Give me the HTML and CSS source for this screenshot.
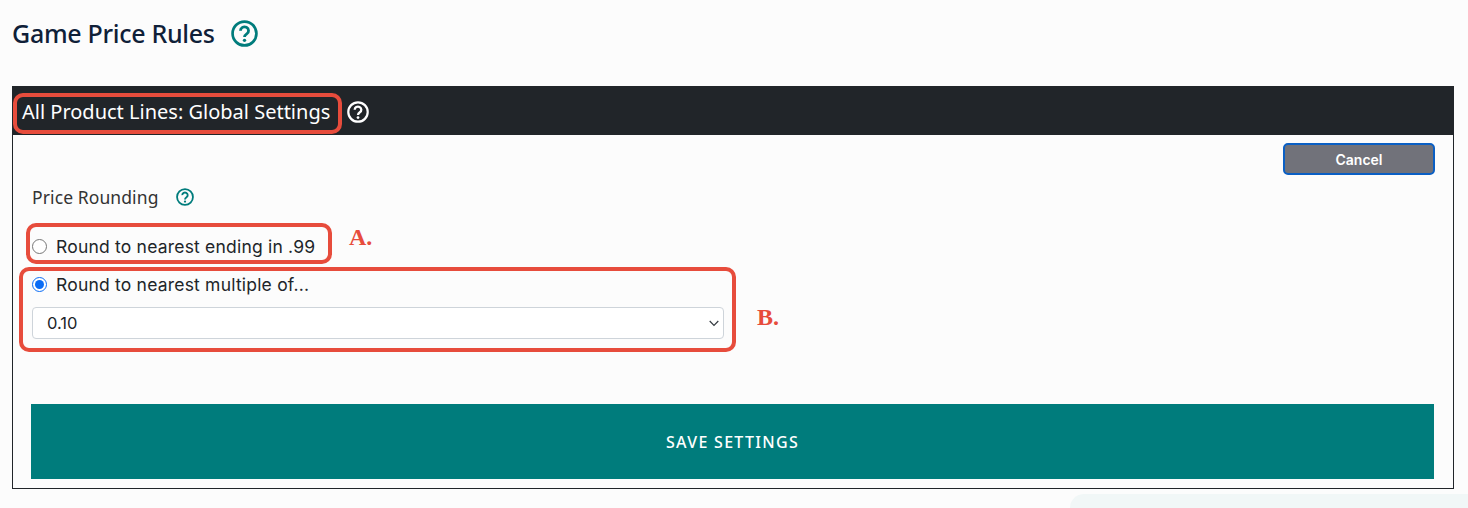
FILE: index.html
```html
<!DOCTYPE html>
<html lang="en">
<head>
    <meta charset="UTF-8">
    <title>Game Price Rules</title>
    <link rel="stylesheet" href="styles.css">
</head>
<body>
    <svg class="defs" width="0" height="0">
        <symbol id="help" viewBox="0 0 24 24">
            <circle cx="12" cy="12" r="10.6" fill="none" stroke="currentColor" stroke-width="2.4"/>
            <path d="M8.4 9.5a3.6 3.4 0 1 1 5.6 2.8c-1.3.9-2 1.500-2 2.900" fill="none" stroke="currentColor" stroke-width="2.500"/>
            <circle cx="12" cy="18.100" r="1.500" fill="currentColor"/>
        </symbol>
    </svg>

    <div class="page-title">
        <h1>Game Price Rules</h1>
        <svg class="help help-lg"><use href="#help"/></svg>
    </div>

    <div class="panel">
        <div class="panel-header">
            <span>All Product Lines: Global Settings</span>
            <svg class="help help-md"><use href="#help"/></svg>
        </div>
        <div class="panel-body">
            <div class="cancel-row">
                <button class="cancel">Cancel</button>
            </div>
            <div class="field-label">
                <span>Price Rounding</span>
                <svg class="help help-sm"><use href="#help"/></svg>
            </div>
            <label class="radio">
                <input type="radio" name="rounding">
                <span>Round to nearest ending in .99</span>
            </label>
            <label class="radio">
                <input type="radio" name="rounding" checked>
                <span>Round to nearest multiple of...</span>
            </label>
            <div class="select">
                <span>0.10</span>
                <svg width="10" height="7" viewBox="0 0 10 7"><path d="M.7 1l4.300 4.300L9.300 1" fill="none" stroke="#343a40" stroke-width="1.200"/></svg>
            </div>
            <button class="save">SAVE SETTINGS</button>
        </div>

        <!-- red annotations on top of the screenshot -->
        <div class="mark mark-title"></div>
        <div class="mark mark-a"></div>
        <div class="mark mark-b"></div>
        <div class="mark-text mark-text-a">A.</div>
        <div class="mark-text mark-text-b">B.</div>
    </div>

    <div class="corner-shape"></div>
</body>
</html>
```

FILE: styles.css
```css
:root {
    --teal: #007c7c;
    --dark: #212529;
    --red: #e74c3c;
}

html, body {
    height: 100%;
}

body {
    margin: 0;
    padding: 16px 14px 0 12px;
    box-sizing: border-box;
    background: #fcfcfc;
    color: var(--dark);
    font-family: Inter, sans-serif;
    overflow: hidden;
    position: relative;
}

.defs {
    position: absolute;
}

.help {
    display: block;
    flex: none;
}

.help-lg {
    width: 27px;
    height: 27px;
    color: var(--teal);
}

.help-md {
    width: 22px;
    height: 22px;
    color: #fff;
}

.help-sm {
    width: 18px;
    height: 18px;
    color: var(--teal);
}

.page-title {
    display: flex;
    align-items: center;
    gap: 16px;
    height: 34px;
    margin-bottom: 36px;
}

h1 {
    margin: 0;
    font-family: "Noto Sans", sans-serif;
    font-size: 25px;
    font-weight: 500;
    letter-spacing: -0.3px;
    color: #0f2038;
}

.panel {
    position: relative;
    border: 1px solid var(--dark);
    border-width: 0 1px 1px 1px;
    height: 403px;
    box-sizing: border-box;
}

.panel-header {
    display: flex;
    align-items: center;
    gap: 17px;
    height: 49px;
    margin: 0 -1px;
    padding: 2px 0 0 10px;
    box-sizing: border-box;
    background: var(--dark);
    color: #fff;
    font-family: "Noto Sans", sans-serif;
    font-size: 20px;
}

.panel-body {
    padding: 8px 19px 0;
}

.cancel-row {
    display: flex;
    justify-content: flex-end;
    margin-right: -1px;
}

.cancel {
    width: 152px;
    height: 32px;
    background: #71727a;
    border: 2px solid #0a5fc4;
    border-radius: 5px;
    color: #fff;
    font-family: Inter, sans-serif;
    font-size: 14px;
    font-weight: 600;
}

.field-label {
    display: flex;
    align-items: center;
    gap: 17px;
    margin-top: 10px;
    height: 24px;
    font-family: "Noto Sans", sans-serif;
    font-size: 17.500px;
    letter-spacing: 0.1px;
    color: #333;
}

.radio {
    display: flex;
    align-items: center;
    gap: 9px;
    height: 24px;
    font-size: 17.500px;
    letter-spacing: 0.2px;
}

.radio input {
    width: 15px;
    height: 15px;
    margin: 0;
    accent-color: #0a6cf5;
}

.field-label + .radio {
    margin-top: 25px;
}

.radio + .radio {
    margin-top: 14px;
}

.select {
    display: flex;
    align-items: center;
    justify-content: space-between;
    box-sizing: border-box;
    width: 692px;
    height: 32px;
    margin-top: 11px;
    padding: 0 4px 0 14px;
    background: #fff;
    border: 1px solid #ced4da;
    border-radius: 4px;
    font-size: 16.500px;
}

.save {
    display: block;
    width: calc(100% + 1px);
    height: 75px;
    margin: 65px 0 0 -1px;
    background: var(--teal);
    border: none;
    color: #fff;
    font-family: "Noto Sans", sans-serif;
    font-size: 16px;
    font-weight: 500;
    letter-spacing: 1.300px;
}

.mark {
    position: absolute;
    box-sizing: border-box;
    border: 4px solid var(--red);
    border-radius: 10px;
}

.mark-title {
    left: 0;
    top: 7px;
    width: 329px;
    height: 41px;
}

.mark-a {
    left: 13px;
    top: 137px;
    width: 306px;
    height: 41px;
}

.mark-b {
    left: 6px;
    top: 181px;
    width: 717px;
    height: 85px;
}

.mark-text {
    position: absolute;
    font-family: "Liberation Serif", serif;
    font-size: 24px;
    font-weight: 700;
    color: var(--red);
}

.mark-text-a {
    left: 336px;
    top: 138px;
}

.mark-text-b {
    left: 744px;
    top: 218px;
}

.corner-shape {
    position: absolute;
    right: 0;
    bottom: 0;
    width: 398px;
    height: 14px;
    background: #f1f7f7;
    border-radius: 16px 0 0 0;
}
```
